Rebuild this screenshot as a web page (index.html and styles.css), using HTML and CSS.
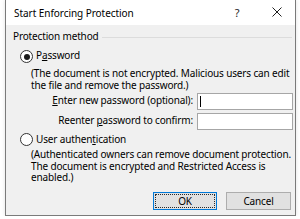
FILE: index.html
```html
<!DOCTYPE html>
<html>
<head>
<meta charset="utf-8">
<link rel="stylesheet" href="styles.css">
</head>
<body>
<div class="dialog">
  <div class="titlebar">
    <span class="title">Start Enforcing Protection</span>
    <span class="help">?</span>
    <svg class="close" width="10" height="10" viewBox="0 0 10 10"><path d="M0.5 0.5L9.5 9.5M9.5 0.5L0.5 9.5" stroke="#1f1f1f" stroke-width="1" fill="none"/></svg>
  </div>
  <div class="content">
    <div class="group-head"><span>Protection method</span><span class="group-line"></span></div>
    <div class="radio-row first">
      <span class="radio checked"></span>
      <span class="radio-label">P<u>a</u>ssword</span>
    </div>
    <div class="desc first-desc">(The document is not encrypted. Malicious users can edit<br>the file and remove the password.)</div>
    <div class="field-row first-field">
      <span class="field-label"><u>E</u>nter new password (optional):</span>
      <span class="input"><span class="caret"></span></span>
    </div>
    <div class="field-row">
      <span class="field-label">Reenter <u>p</u>assword to confirm:</span>
      <span class="input"></span>
    </div>
    <div class="radio-row second">
      <span class="radio"></span>
      <span class="radio-label">User authen<u>t</u>ication</span>
    </div>
    <div class="desc second-desc">(Authenticated owners can remove document protection.<br>The document is encrypted and Restricted Access is<br>enabled.)</div>
    <div class="buttons">
      <span class="btn default">OK</span>
      <span class="btn cancel">Cancel</span>
    </div>
  </div>
</div>
</body>
</html>
```
FILE: styles.css
```css
html, body {
  margin: 0;
  padding: 0;
  background: #ffffff;
}
body {
  font-family: "Noto Sans", "Open Sans", sans-serif;
  font-size: 10px;
  letter-spacing: -0.15px;
  color: #000;
}
.dialog {
  margin-left: 5px;
  width: 289px;
  height: 215px;
  border: 1px solid #7a7a7a;
  border-top: 0;
  display: flex;
  flex-direction: column;
  box-shadow: 0 0 4px rgba(0,0,0,0.12);
}
.titlebar {
  height: 25px;
  background: #fff;
  display: flex;
  align-items: center;
  padding-left: 8px;
  line-height: 12px;
  flex: none;
}
.title {
  flex: 1;
  white-space: nowrap;
  letter-spacing: -0.05px;
}
.help {
  width: 6px;
  text-align: center;
  font-size: 11px;
  margin-right: 32px;
  color: #1f1f1f;
}
.close {
  display: block;
  margin-right: 13px;
  margin-top: -1px;
}
.content {
  flex: 1;
  background: #f0f0f0;
  padding: 5px 2px 5px 7px;
  display: flex;
  flex-direction: column;
}
.group-head {
  display: flex;
  line-height: 12px;
  white-space: nowrap;
}
.group-line {
  flex: 1;
  height: 1px;
  background: #dcdcdc;
  margin: 7px 1px 0 3px;
}
.radio-row {
  display: flex;
  align-items: flex-start;
  padding-left: 7px;
  line-height: 12px;
  white-space: nowrap;
}
.radio-row.first { margin-top: 8px; }
.radio-row.second { margin-top: 3px; }
.radio {
  width: 11px;
  height: 11px;
  border: 1px solid #333;
  border-radius: 50%;
  background: #fff;
  position: relative;
  flex: none;
}
.radio.checked::after {
  content: "";
  position: absolute;
  left: 2.5px;
  top: 2.5px;
  width: 6px;
  height: 6px;
  border-radius: 50%;
  background: #1a1a1a;
}
.radio-label {
  margin-left: 3px;
}
.radio-row.first .radio-label { margin-top: -1px; }
.desc {
  margin-left: 18px;
  line-height: 11.5px;
  white-space: nowrap;
}
.first-desc { margin-top: 5px; }
.second-desc { margin-top: 3px; }
.field-row {
  display: flex;
  justify-content: flex-end;
  align-items: flex-start;
  gap: 4px;
  margin-top: 3px;
  line-height: 12px;
  white-space: nowrap;
}
.field-row.first-field { margin-top: 2px; }
.field-label { margin-top: 1px; }
.input {
  width: 92px;
  height: 15px;
  border: 1px solid #a6a6a6;
  background: #fff;
  display: flex;
  align-items: center;
  padding-left: 2px;
}
.caret {
  width: 1px;
  height: 11px;
  background: #000;
}
.buttons {
  margin-top: auto;
  display: flex;
  justify-content: flex-end;
  gap: 9px;
  margin-right: 2px;
}
.btn {
  height: 16px;
  border: 1px solid #adadad;
  background: #e1e1e1;
  display: flex;
  align-items: center;
  justify-content: center;
  line-height: 12px;
}
.btn.default {
  width: 62px;
  border-color: #0078d7;
  outline: 1px dotted #2a2a2a;
  outline-offset: -3px;
}
.btn.cancel {
  width: 63px;
}
```
